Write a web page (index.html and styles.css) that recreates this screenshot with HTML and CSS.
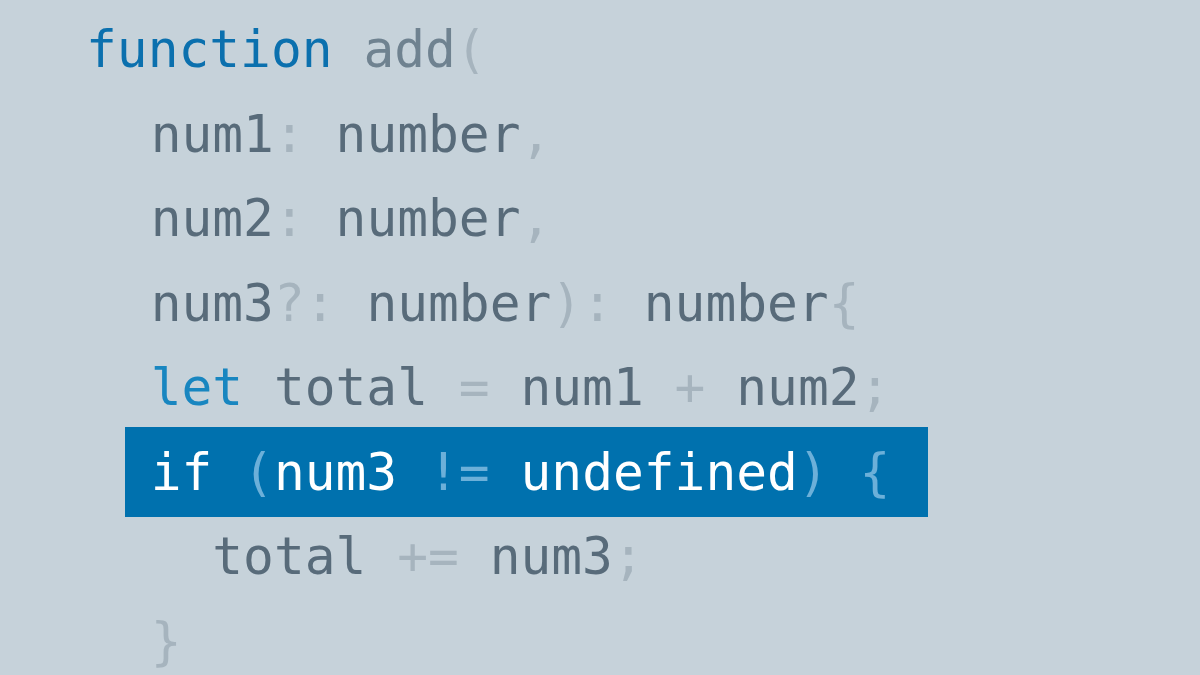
FILE: index.html
```html
<!DOCTYPE html>
<html>
<head>
<meta charset="utf-8">
<link rel="stylesheet" href="styles.css">
</head>
<body>
<div class="code">
  <div class="line"><span class="kw">function</span> <span class="fn">add</span><span class="p">(</span></div>
  <div class="line i2"><span class="id">num1</span><span class="p">:</span> <span class="id">number</span><span class="p">,</span></div>
  <div class="line i2"><span class="id">num2</span><span class="p">:</span> <span class="id">number</span><span class="p">,</span></div>
  <div class="line i2"><span class="id">num3</span><span class="p">?:</span> <span class="id">number</span><span class="p">):</span> <span class="id">number</span><span class="p">{</span></div>
  <div class="line i2"><span class="kw2">let</span> <span class="id">total</span> <span class="p">=</span> <span class="id">num1</span> <span class="p">+</span> <span class="id">num2</span><span class="p">;</span></div>
  <div class="line hl"><span class="w">if</span> <span class="hp">(</span><span class="w">num3</span> <span class="hp">!=</span> <span class="w">undefined</span><span class="hp">)</span> <span class="hp">{</span></div>
  <div class="line i4"><span class="id">total</span> <span class="p">+=</span> <span class="id">num3</span><span class="p">;</span></div>
  <div class="line i2"><span class="p">}</span></div>
</div>
</body>
</html>
```
FILE: styles.css
```css
html, body {
  margin: 0;
  padding: 0;
  background: #c6d2da;
  width: 1200px;
  height: 675px;
  overflow: hidden;
}
.code {
  font-family: "DejaVu Sans Mono", monospace;
  font-size: 51.2px;
  line-height: 84.5px;
  padding: 7px 0 0 86px;
}
.line {
  height: 84.5px;
  white-space: pre;
}
.i2 { padding-left: calc(2ch + 3px); }
.i4 { padding-left: calc(4ch + 3px); }
.hl {
  box-sizing: border-box;
  width: 803px;
  height: 90px;
  line-height: 90px;
  margin: -2.75px 0 -2.75px calc(2ch - 23px);
  padding-left: 26px;
  background: #0071ae;
}
.kw { color: #0b70ae; }
.kw2 { color: #1886c0; }
.fn { color: #6f8290; }
.id { color: #586b7a; }
.p { color: #a6b4be; }
.w { color: #ffffff; }
.hp { color: #6cb0d9; }
```
